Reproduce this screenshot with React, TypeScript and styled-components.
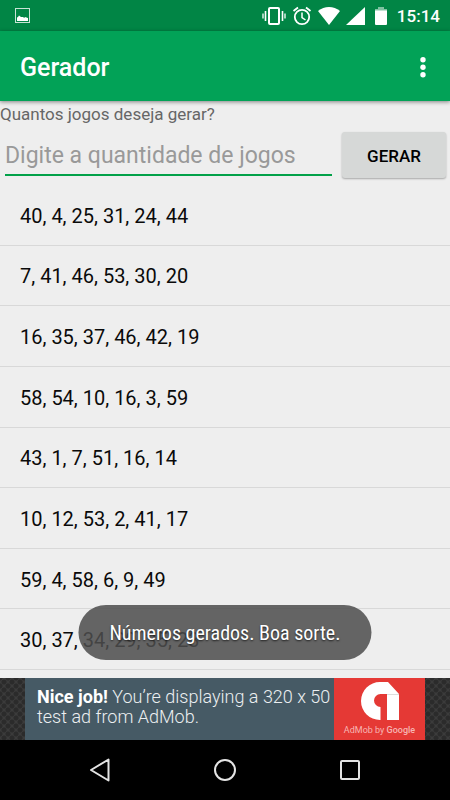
import React from "react";
import styled, { createGlobalStyle } from "styled-components";

const GlobalStyle = createGlobalStyle`
  *, *::before, *::after { box-sizing: border-box; }
  body {
    margin: 0;
    background: #eeeeee;
    font-family: Roboto, "Liberation Sans", sans-serif;
  }
  button, input { font-family: inherit; }
`;

const Screen = styled.div`
  position: relative;
  display: flex;
  flex-direction: column;
  min-height: 100vh;
  background: #eeeeee;
`;

const StatusBar = styled.div`
  display: flex;
  align-items: center;
  justify-content: space-between;
  height: 31px;
  padding: 0 10px 0 15px;
  background: #018545;
  color: #ffffff;
`;

const StatusIcons = styled.div`
  display: flex;
  align-items: center;
  gap: 6px;
`;

const Clock = styled.time`
  font-size: 17px;
  font-weight: 500;
  line-height: 24px;
`;

const AppBar = styled.header`
  position: relative;
  display: flex;
  align-items: center;
  justify-content: space-between;
  height: 70px;
  padding: 4px 16px 0 20px;
  background: #02a257;
  color: #ffffff;
  box-shadow: 0 1px 4px rgba(0, 0, 0, 0.45);
`;

const Title = styled.h1`
  margin: 0;
  font-size: 25px;
  font-weight: 500;
  line-height: 32px;
`;

const MenuButton = styled.button`
  display: flex;
  padding: 0 8px;
  border: 0;
  background: none;
  color: inherit;
  cursor: pointer;
`;

const Form = styled.form`
  display: flex;
  flex-direction: column;
`;

const Label = styled.label`
  padding-top: 1px;
  color: #666666;
  font-size: 17px;
  line-height: 24px;
`;

const FormRow = styled.div`
  display: flex;
  align-items: flex-start;
  gap: 10px;
  padding: 6px 4px 7px 5px;
`;

const QuantityInput = styled.input`
  flex: 1;
  min-width: 0;
  height: 44px;
  padding: 4px 0 0;
  border: 0;
  border-bottom: 2px solid #02a149;
  border-radius: 0;
  outline: 0;
  background: none;
  color: #111111;
  font-size: 23px;
  &::placeholder { color: #999999; opacity: 1; }
`;

const GenerateButton = styled.button`
  width: 104px;
  height: 46px;
  padding: 2px 0 0;
  border: 0;
  border-radius: 3px;
  background: #d6d8d7;
  color: #000000;
  box-shadow: 0 1px 2px rgba(0, 0, 0, 0.3);
  font-size: 17px;
  font-weight: 500;
  cursor: pointer;
`;

const GameList = styled.ul`
  display: flex;
  flex: 1;
  flex-direction: column;
  margin: 0;
  padding: 0 0 8px;
  list-style: none;
`;

const Game = styled.li`
  display: flex;
  flex: 1;
  align-items: center;
  min-height: 48px;
  padding: 2px 20px 0;
  border-bottom: 1px solid #d8d8d8;
  color: #0a0a0a;
  font-size: 20px;
  line-height: 24px;
`;

const Toast = styled.div`
  position: absolute;
  bottom: 140px;
  left: 50%;
  padding: 16px 31px 15px;
  border-radius: 28px;
  background: rgba(77, 77, 77, 0.86);
  color: #ffffff;
  font-family: "Roboto Condensed", Roboto, sans-serif;
  font-size: 20px;
  line-height: 24px;
  text-shadow: 0 1px 2px rgba(0, 0, 0, 0.7);
  white-space: nowrap;
  transform: translateX(-50%);
`;

const AdStrip = styled.aside`
  display: flex;
  justify-content: center;
  height: 62px;
  background-color: #3b3b3b;
  background-image: radial-gradient(circle, #2b2b2b 2px, transparent 3px),
    radial-gradient(circle, #2b2b2b 2px, transparent 3px);
  background-position: 0 0, 4px 4px;
  background-size: 8px 8px;
`;

const Ad = styled.a`
  display: flex;
  width: 400px;
  background: #465a65;
  color: #eceff1;
  text-decoration: none;
`;

const AdCopy = styled.p`
  flex: 1;
  margin: 0;
  padding: 9px 0 0 12px;
  font-size: 18px;
  font-weight: 300;
  line-height: 20px;
  white-space: nowrap;
  strong { color: #ffffff; font-weight: 700; }
`;

const AdLogo = styled.div`
  display: flex;
  flex-direction: column;
  align-items: center;
  width: 91px;
  padding-top: 4px;
  background: #e53935;
  color: #f7b5b3;
  font-size: 9px;
  line-height: 20px;
  white-space: nowrap;
  b { font-weight: 500; }
`;

const NavBar = styled.nav`
  display: flex;
  align-items: center;
  justify-content: center;
  gap: 77px;
  height: 60px;
  background: #000000;
`;

const NavButton = styled.button`
  display: flex;
  align-items: center;
  justify-content: center;
  width: 48px;
  height: 48px;
  padding: 0;
  border: 0;
  background: none;
  color: #e4e4e4;
  cursor: pointer;
`;

const games: number[][] = [
  [40, 4, 25, 31, 24, 44],
  [7, 41, 46, 53, 30, 20],
  [16, 35, 37, 46, 42, 19],
  [58, 54, 10, 16, 3, 59],
  [43, 1, 7, 51, 16, 14],
  [10, 12, 53, 2, 41, 17],
  [59, 4, 58, 6, 9, 49],
  [30, 37, 34, 29, 35, 23],
];

const PictureIcon = () => (
  <svg width="15" height="15" viewBox="0 0 15 15" aria-hidden="true">
    <rect x="0.5" y="0.5" width="14" height="14" fill="none" stroke="#c8e3d5" />
    <path d="M2 13V9.500L3 9l1-1.500L6 9h2l1 .8L11 9l1 1 1-.3V13z" fill="#fff" />
  </svg>
);

const VibrateIcon = () => (
  <svg width="24" height="18" viewBox="0 0 24 18" fill="none" stroke="#fff" aria-hidden="true">
    <rect x="7" y="1" width="10" height="16" rx="1" strokeWidth="2" />
    <path d="M3.5 4v10M20.5 4v10" strokeWidth="1.6" />
    <path d="M1 6.5v5M23 6.5v5" strokeWidth="1.3" />
  </svg>
);

const AlarmIcon = () => (
  <svg width="20" height="20" viewBox="0 0 20 20" fill="none" stroke="#fff" aria-hidden="true">
    <circle cx="10" cy="11" r="7.2" strokeWidth="1.8" />
    <path d="M1.5 5L6 1.5M18.5 5L14 1.5" strokeWidth="1.8" />
    <path d="M10 6.5v5l3.5 2.5" strokeWidth="1.5" />
  </svg>
);

const WifiIcon = () => (
  <svg width="22" height="18" viewBox="0 0 22 18" aria-hidden="true">
    <path d="M0 4Q5 0 11 0t11 4L11 18z" fill="#fff" />
  </svg>
);

const SignalIcon = () => (
  <svg width="19" height="18" viewBox="0 0 19 18" aria-hidden="true">
    <path d="M19 0v18H0z" fill="#fff" />
  </svg>
);

const BatteryIcon = () => (
  <svg width="20" height="18" viewBox="0 0 20 18" aria-hidden="true">
    <path d="M7 0h6v2h3v2H4V2h3z" fill="#80c2a2" />
    <path d="M4 3.5h12V17q0 1-1 1H5q-1 0-1-1z" fill="#fff" />
  </svg>
);

const DotsIcon = () => (
  <svg width="6" height="22" viewBox="0 0 6 22" fill="#fff" aria-hidden="true">
    <circle cx="3" cy="2.7" r="2.7" />
    <circle cx="3" cy="10.2" r="2.7" />
    <circle cx="3" cy="17.7" r="2.7" />
  </svg>
);

const AdMobMark = () => (
  <svg width="38" height="38" viewBox="0 0 38 38" aria-hidden="true">
    <path d="M19 0h8l11 12v26H26V12h-6.5a6.5 6.5 0 0 0 0 13V38H19A19 19 0 0 1 19 0z" fill="#fff" />
    <path d="M26 12.5h12" stroke="#ddd" />
  </svg>
);

export default function App() {
  return (
    <Screen>
      <GlobalStyle />
      <StatusBar>
        <PictureIcon />
        <StatusIcons>
          <VibrateIcon />
          <AlarmIcon />
          <WifiIcon />
          <SignalIcon />
          <BatteryIcon />
          <Clock>15:14</Clock>
        </StatusIcons>
      </StatusBar>
      <AppBar>
        <Title>Gerador</Title>
        <MenuButton type="button" aria-label="Mais opções">
          <DotsIcon />
        </MenuButton>
      </AppBar>
      <Form onSubmit={(event) => event.preventDefault()}>
        <Label htmlFor="quantity">Quantos jogos deseja gerar?</Label>
        <FormRow>
          <QuantityInput id="quantity" inputMode="numeric" placeholder="Digite a quantidade de jogos" />
          <GenerateButton type="submit">GERAR</GenerateButton>
        </FormRow>
      </Form>
      <GameList>
        {games.map((numbers) => (
          <Game key={numbers.join("-")}>{numbers.join(", ")}</Game>
        ))}
      </GameList>
      <Toast role="status">Números gerados. Boa sorte.</Toast>
      <AdStrip>
        <Ad href="#admob">
          <AdCopy>
            <strong>Nice job!</strong> You’re displaying a 320 x 50
            <br />
            test ad from AdMob.
          </AdCopy>
          <AdLogo>
            <AdMobMark />
            <span>
              AdMob by <b>Google</b>
            </span>
          </AdLogo>
        </Ad>
      </AdStrip>
      <NavBar>
        <NavButton type="button" aria-label="Voltar">
          <svg width="22" height="24" viewBox="0 0 22 24" aria-hidden="true">
            <path d="M19.5 1.5v21L2 12z" fill="none" stroke="currentColor" strokeWidth="2" strokeLinejoin="round" />
          </svg>
        </NavButton>
        <NavButton type="button" aria-label="Início">
          <svg width="22" height="22" viewBox="0 0 22 22" aria-hidden="true">
            <circle cx="11" cy="11" r="10" fill="none" stroke="currentColor" strokeWidth="2" />
          </svg>
        </NavButton>
        <NavButton type="button" aria-label="Aplicativos recentes">
          <svg width="20" height="20" viewBox="0 0 20 20" aria-hidden="true">
            <rect x="1" y="1" width="18" height="18" rx="1" fill="none" stroke="currentColor" strokeWidth="2" />
          </svg>
        </NavButton>
      </NavBar>
    </Screen>
  );
}
